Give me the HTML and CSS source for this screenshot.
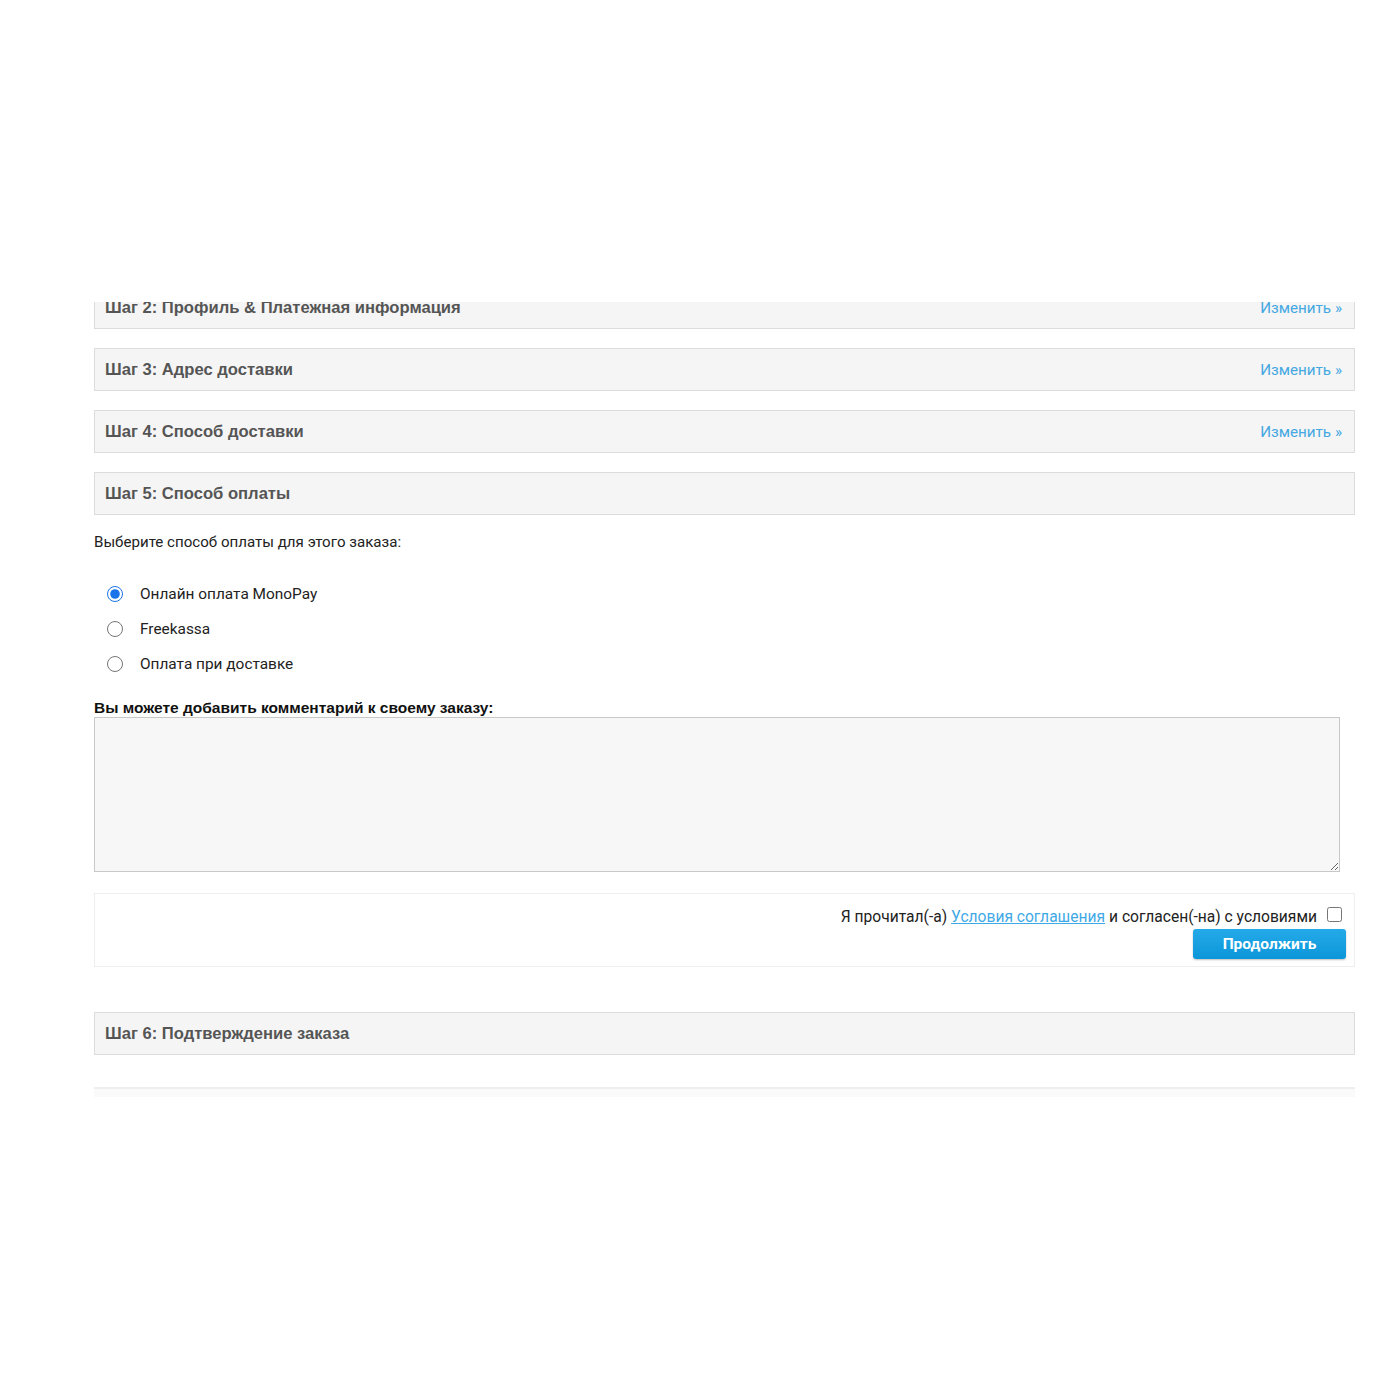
FILE: index.html
```html
<!DOCTYPE html>
<html lang="ru">

<head>
    <meta charset="UTF-8">
    <title>Оформление заказа</title>
    <link rel="stylesheet" href="styles.css">
</head>

<body>
    <div class="checkout">
        <div class="panel cut-top">
            <span class="panel-title">Шаг 2: Профиль &amp; Платежная информация</span>
            <a class="edit" href="#">Изменить »</a>
        </div>
        <div class="panel">
            <span class="panel-title">Шаг 3: Адрес доставки</span>
            <a class="edit" href="#">Изменить »</a>
        </div>
        <div class="panel">
            <span class="panel-title">Шаг 4: Способ доставки</span>
            <a class="edit" href="#">Изменить »</a>
        </div>
        <div class="panel">
            <span class="panel-title">Шаг 5: Способ оплаты</span>
        </div>

        <div class="payment">
            <p class="lead">Выберите способ оплаты для этого заказа:</p>
            <ul class="methods">
                <li><label><input type="radio" name="pay" checked> Онлайн оплата MonoPay</label></li>
                <li><label><input type="radio" name="pay"> Freekassa</label></li>
                <li><label><input type="radio" name="pay"> Оплата при доставке</label></li>
            </ul>
            <p class="comment-title">Вы можете добавить комментарий к своему заказу:</p>
            <textarea class="comment"></textarea>
            <div class="buttons">
                <div class="agree">
                    Я прочитал(-а) <a href="#">Условия соглашения</a> и согласен(-на) с условиями
                    <input type="checkbox">
                </div>
                <button class="btn">Продолжить</button>
            </div>
        </div>

        <div class="panel">
            <span class="panel-title">Шаг 6: Подтверждение заказа</span>
        </div>
        <div class="footer-line"></div>
    </div>
</body>

</html>
```

FILE: styles.css
```css
body {
    margin: 0;
    background: #fff;
    font-family: Roboto, "Liberation Sans", sans-serif;
    color: #222;
}

.checkout {
    margin: 302px 45px 0 94px;
    width: 1261px;
    height: 795px;
    overflow: hidden;
}

.panel {
    display: flex;
    justify-content: space-between;
    align-items: center;
    box-sizing: border-box;
    height: 43px;
    padding: 1px 12px 0 10px;
    margin-bottom: 19px;
    background: #f5f5f5;
    border: 1px solid #dcdcdc;
}

.panel.cut-top {
    margin-top: -16px;
}

.panel-title {
    font: bold 16.6px "Liberation Sans", Arial, sans-serif;
    color: #555;
}

.edit {
    font-size: 15.2px;
    color: #45a8e2;
    text-decoration: none;
}

.payment {
    margin-top: -2px;
}

.lead {
    margin: 0;
    font-size: 15.1px;
    line-height: 20px;
}

.methods {
    list-style: none;
    margin: 0;
    padding: 32px 0 10px 12px;
}

.methods li {
    height: 35px;
}

.methods label {
    display: flex;
    align-items: center;
    font-size: 15.4px;
    line-height: 20px;
}

.methods input {
    width: 16px;
    height: 16px;
    margin: 0 17px 0 1px;
    accent-color: #1a73e8;
}

.comment-title {
    margin: 0;
    font: bold 15.5px "Liberation Sans", Arial, sans-serif;
    line-height: 18px;
    color: #111;
}

.comment {
    display: block;
    box-sizing: border-box;
    width: 1246px;
    height: 155px;
    margin: 0 0 21px;
    background: #f7f7f7;
    border: 1px solid #c8c8c8;
}

.buttons {
    display: flex;
    flex-direction: column;
    align-items: flex-end;
    height: 74px;
    padding: 14px 8px 0;
    margin-bottom: 45px;
    border: 1px solid #eee;
    box-sizing: border-box;
}

.agree {
    display: flex;
    align-items: center;
    font-size: 15.6px;
    line-height: 18px;
    color: #222;
}

.agree a {
    color: #3fa9e6;
    margin: 0 4px;
}

.agree input {
    width: 15px;
    height: 15px;
    margin: -6px 4px 0 10px;
}

.btn {
    width: 153px;
    height: 30px;
    margin-top: 3px;
    border: 0;
    border-radius: 3px;
    background: linear-gradient(#25aae8, #0b96d9);
    box-shadow: 0 1px 2px rgba(0, 0, 0, .25);
    color: #fff;
    font: bold 15.5px Roboto, "Liberation Sans", sans-serif;
}

.footer-line {
    margin-top: 32px;
    height: 20px;
    border-top: 2px solid #eee;
    background: #fafafa;
}
```
